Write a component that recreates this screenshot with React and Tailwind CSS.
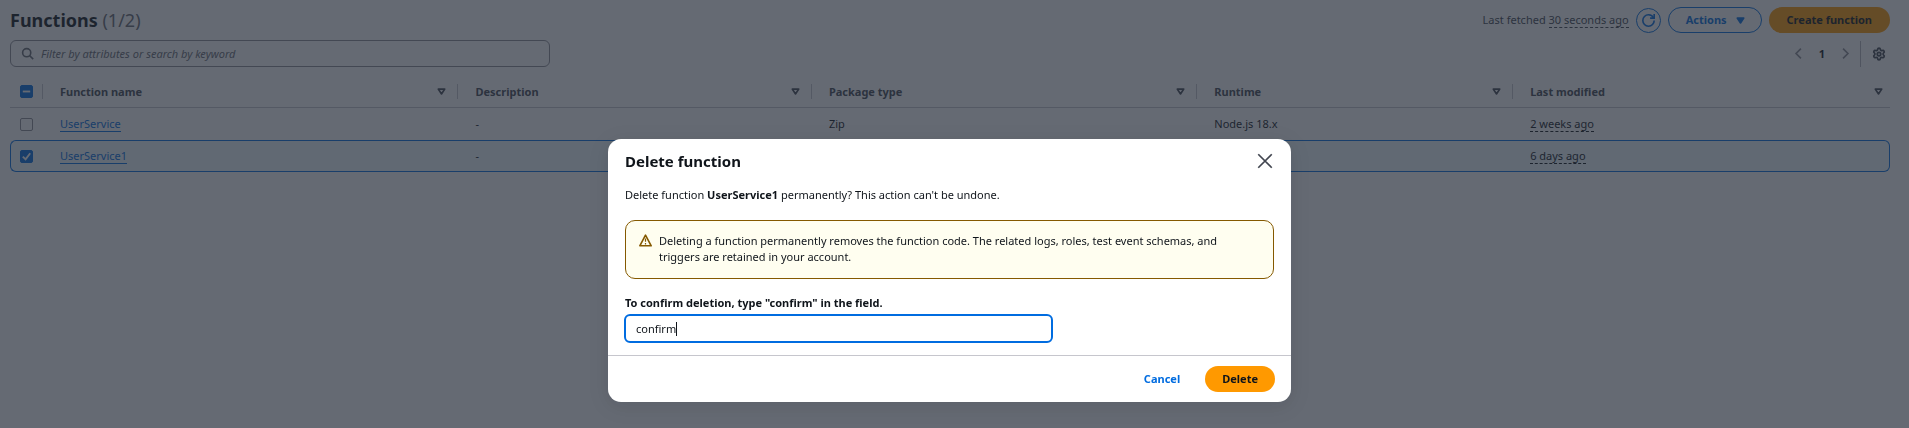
import { Settings } from "lucide-react";

function Icon({ className = "", size = "size-[13px]", width = "2", children }) {
  return (
    <svg viewBox="0 0 16 16" fill="none" stroke="currentColor" strokeWidth={width} aria-hidden="true" className={`${size} shrink-0 ${className}`}>
      {children}
    </svg>
  );
}

const columns = [
  { name: "Function name", width: "w-[22.1%]" },
  { name: "Description", width: "w-[18.8%]" },
  { name: "Package type", width: "w-[20.5%]" },
  { name: "Runtime", width: "w-[16.8%]" },
  { name: "Last modified", width: "" },
];

const rows = [
  { name: "UserService", description: "-", packageType: "Zip", runtime: "Node.js 18.x", modified: "2 weeks ago", selected: false },
  { name: "UserService1", description: "-", packageType: "Zip", runtime: "Node.js 18.x", modified: "6 days ago", selected: true },
];

function Checkbox({ label, checked = false, indeterminate = false }) {
  return (
    <div className="relative size-[13px]">
      <input
        type="checkbox"
        aria-label={label}
        defaultChecked={checked}
        ref={(el) => {
          if (el) el.indeterminate = indeterminate;
        }}
        className="block size-[13px] appearance-none rounded-[2px] border border-[#8c8c94] bg-white checked:border-[#006ce0] checked:bg-[#006ce0] indeterminate:border-[#006ce0] indeterminate:bg-[#006ce0]"
      />
      {(checked || indeterminate) && (
        <svg viewBox="0 0 14 14" fill="none" stroke="white" strokeWidth="2" aria-hidden="true" className="pointer-events-none absolute inset-0 size-[13px]">
          {indeterminate ? <path d="M3 7h8" /> : <path d="M3 7.2 6 10l5-6.5" />}
        </svg>
      )}
    </div>
  );
}

function Cell({ selected, last, children }) {
  const border = selected ? "border-y border-[#006ce0] bg-[#f0fbff]" : "";
  const end = last && selected ? "rounded-r-md border-r" : "";
  return <td className={`h-8 py-0 pr-0 pl-[17px] ${border} ${end}`}>{children}</td>;
}

function FunctionsPage() {
  return (
    <main className="pt-[7px] pr-[19px] pl-[10px]">
      <header className="flex items-center justify-between">
        <h1 className="text-[18px] leading-6 font-bold">
          Functions <span className="font-normal text-[#656871]">(1/2)</span>
        </h1>
        <div className="flex items-center gap-[7px]">
          <p className="text-[#424650]">
            Last fetched <span className="border-b border-dashed border-[#424650]">30 seconds ago</span>
          </p>
          <button type="button" aria-label="Refresh" className="flex size-[25px] items-center justify-center rounded-full border border-[#006ce0] text-[#006ce0]">
            <Icon>
              <path d="M10 5h5V0" />
              <path d="M15 8a6.957 6.957 0 0 1-7 7 6.957 6.957 0 0 1-7-7 6.957 6.957 0 0 1 7-7 6.870 6.870 0 0 1 6.300 4" />
            </Icon>
          </button>
          <button type="button" className="flex h-[26px] items-center gap-[7px] rounded-full border border-[#006ce0] pr-[14px] pl-[17px] font-bold text-[#006ce0]">
            Actions
            <Icon>
              <path d="M4 5h8l-4 6-4-6z" fill="currentColor" strokeLinejoin="round" />
            </Icon>
          </button>
          <button type="button" className="h-[26px] rounded-full bg-[#ff9900] px-[18px] font-bold">
            Create function
          </button>
        </div>
      </header>

      <div className="mt-[7px] flex items-center justify-between">
        <div className="flex h-[27px] w-[540px] items-center gap-[7px] rounded-md border border-[#8c8c94] px-[10px]">
          <Icon className="text-[#656871]">
            <circle cx="7" cy="7" r="5" />
            <path d="m15 15-4.500-4.500" />
          </Icon>
          <input
            type="text"
            aria-label="Filter functions"
            placeholder="Filter by attributes or search by keyword"
            className="grow outline-none placeholder:text-[#656871] placeholder:italic"
          />
        </div>
        <nav aria-label="Pagination" className="flex items-center pr-1">
          <button type="button" aria-label="Previous page" className="text-[#8c8c94]">
            <Icon>
              <path d="M11 2 5 8l6 6" />
            </Icon>
          </button>
          <button type="button" className="w-[34px] text-center font-bold">
            1
          </button>
          <button type="button" aria-label="Next page" className="text-[#8c8c94]">
            <Icon>
              <path d="m5 2 6 6-6 6" />
            </Icon>
          </button>
          <span className="mr-[11px] ml-2 h-[26px] w-px bg-[#b4b4bb]" />
          <button type="button" aria-label="Preferences" className="text-[#424650]">
            <Settings className="size-[14px]" strokeWidth={3} />
          </button>
        </nav>
      </div>

      <table className="mt-[9px] w-full table-fixed border-separate border-spacing-0 text-left">
        <thead>
          <tr>
            <th className="h-8 w-[33px] border-b border-[#c6c6cd] p-0">
              <div className="flex h-[15px] items-center border-r border-[#c6c6cd] pl-[10px]">
                <Checkbox label="Select all functions" indeterminate />
              </div>
            </th>
            {columns.map((c, i) => (
              <th key={c.name} className={`border-b border-[#c6c6cd] p-0 text-[#424650] ${c.width}`}>
                <div className={`flex h-[15px] items-center justify-between pl-[17px] ${i < columns.length - 1 ? "border-r border-[#c6c6cd] pr-[9px]" : "pr-[5px]"}`}>
                  {c.name}
                  <button type="button" aria-label={`Sort by ${c.name}`}>
                    <Icon>
                      <path d="M4 5h8l-4 6-4-6z" strokeLinejoin="round" />
                    </Icon>
                  </button>
                </div>
              </th>
            ))}
          </tr>
        </thead>
        <tbody>
          {rows.map((r) => (
            <tr key={r.name}>
              <td className={`h-8 py-0 pr-0 ${r.selected ? "rounded-l-md border-y border-l border-[#006ce0] bg-[#f0fbff] pl-[9px]" : "pl-[10px]"}`}>
                <Checkbox label={`Select ${r.name}`} checked={r.selected} />
              </td>
              <Cell selected={r.selected}>
                <a href="#" className="border-b border-[#006ce0] text-[#006ce0]">
                  {r.name}
                </a>
              </Cell>
              <Cell selected={r.selected}>{r.description}</Cell>
              <Cell selected={r.selected}>{r.packageType}</Cell>
              <Cell selected={r.selected}>{r.runtime}</Cell>
              <Cell selected={r.selected} last>
                <span className="border-b border-dashed border-[#0f141a]">{r.modified}</span>
              </Cell>
            </tr>
          ))}
        </tbody>
      </table>
    </main>
  );
}

function DeleteDialog() {
  return (
    <div className="fixed inset-0 flex items-start justify-center bg-[rgba(35,43,55,0.7)] pt-[139px] pr-[10px]">
      <section role="dialog" aria-modal="true" aria-labelledby="dialog-title" className="w-[683px] rounded-[13px] bg-white shadow-[0_4px_20px_1px_rgba(0,7,22,0.1)]">
        <header className="flex items-center justify-between px-[17px] pt-3">
          <h2 id="dialog-title" className="text-[15px] leading-5 font-bold">
            Delete function
          </h2>
          <button type="button" aria-label="Close" className="text-[#424650]">
            <Icon size="size-[18px]" width="1.5">
              <path d="m2 2 12 12M14 2 2 14" />
            </Icon>
          </button>
        </header>
        <div className="px-[17px] pt-4 pb-3">
          <p>
            Delete function <strong>UserService1</strong> permanently? This action can't be undone.
          </p>
          <div role="alert" className="mt-[17px] flex gap-[7px] rounded-[10px] border border-[#855900] bg-[#fffef0] pt-3 pr-10 pb-[13px] pl-[13px]">
            <Icon className="mt-px text-[#855900]">
              <path d="m8 1.500 7 13H1z" strokeLinejoin="round" />
              <path d="M8 5.500v4M8 11v2" strokeWidth="1.500" />
            </Icon>
            <p>Deleting a function permanently removes the function code. The related logs, roles, test event schemas, and triggers are retained in your account.</p>
          </div>
          <label htmlFor="confirm" className="mt-4 block font-bold">
            To confirm deletion, type "confirm" in the field.
          </label>
          <div className="mt-[3px] -ml-px flex h-[29px] w-[429px] items-center rounded-md border-2 border-[#006ce0] px-[10px]">
            <input id="confirm" type="text" defaultValue="confirm" className="field-sizing-content outline-none" />
            <span className="h-[14px] w-px bg-[#0f141a]" />
          </div>
        </div>
        <footer className="flex items-center justify-end gap-[25px] border-t border-[#c6c6cd] px-4 py-[10px]">
          <button type="button" className="font-bold text-[#006ce0]">
            Cancel
          </button>
          <button type="button" className="h-[26px] rounded-full bg-[#ff9900] px-[17px] font-bold">
            Delete
          </button>
        </footer>
      </section>
    </div>
  );
}

export default function App() {
  return (
    <div className="min-h-screen bg-white font-['Noto_Sans','Open_Sans',sans-serif] text-[11px] leading-4 text-[#0f141a]">
      <FunctionsPage />
      <DeleteDialog />
    </div>
  );
}
